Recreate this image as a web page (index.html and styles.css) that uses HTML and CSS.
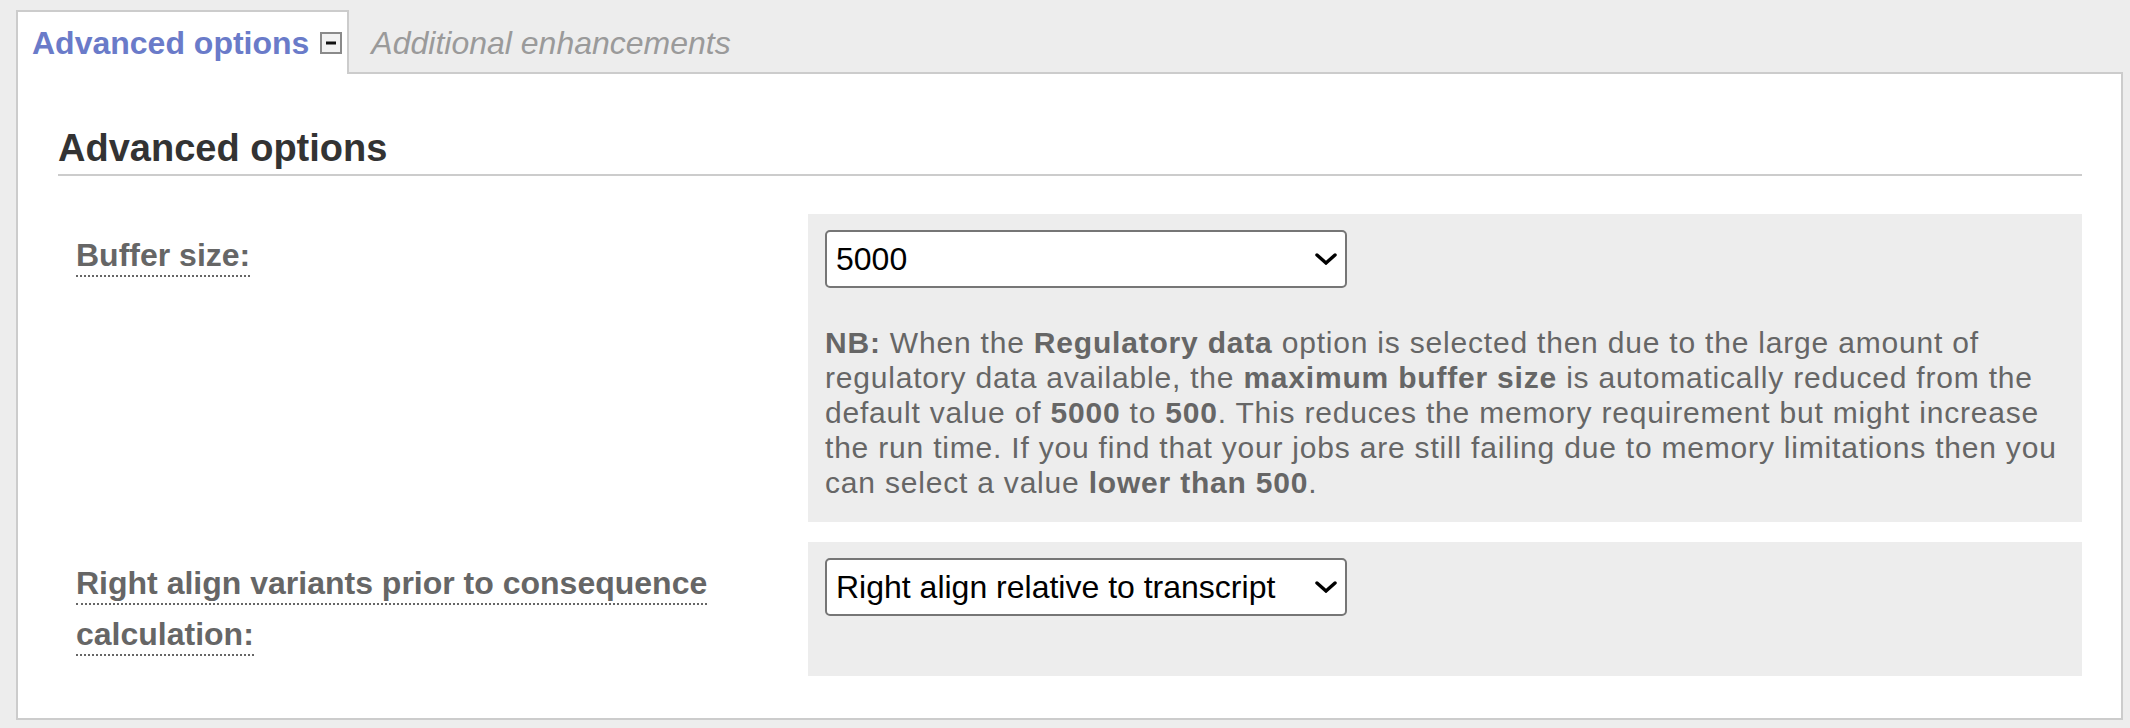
FILE: index.html
```html
<!DOCTYPE html>
<html lang="en">
<head>
<meta charset="utf-8">
<title>Advanced options</title>
<link rel="stylesheet" href="styles.css">
</head>
<body>
<div class="page">
  <div class="tabs">
    <div class="tab tab-active">Advanced options<svg class="toggle" width="22" height="22" viewBox="0 0 22 22"><rect x="1" y="1" width="20" height="20" fill="#f2f2f2" stroke="#8a8a8a" stroke-width="2"/><rect x="6" y="9.5" width="10" height="3" fill="#111"/></svg></div>
    <div class="tab">Additional enhancements</div>
  </div>
  <div class="panel">
    <h2 class="section-title">Advanced options</h2>
    <div class="rows">
      <div class="row">
        <div class="label-cell"><span class="label">Buffer size:</span></div>
        <div class="field-cell">
          <div class="select-wrap">
            <select class="select"><option>5000</option></select>
            <svg class="chevron" width="22" height="12" viewBox="0 0 22 12"><polyline points="2,2 11,10 20,2" fill="none" stroke="#000" stroke-width="3.4" stroke-linecap="round" stroke-linejoin="miter"/></svg>
          </div>
          <p class="note"><b>NB:</b> When the <b>Regulatory data</b> option is selected then due to the large amount of regulatory data available, the <b>maximum buffer size</b> is automatically reduced from the default value of <b>5000</b> to <b>500</b>. This reduces the memory requirement but might increase the run time. If you find that your jobs are still failing due to memory limitations then you can select a value <b>lower than 500</b>.</p>
        </div>
      </div>
      <div class="row">
        <div class="label-cell"><span class="label">Right align variants prior to consequence calculation:</span></div>
        <div class="field-cell">
          <div class="select-wrap">
            <select class="select"><option>Right align relative to transcript</option></select>
            <svg class="chevron" width="22" height="12" viewBox="0 0 22 12"><polyline points="2,2 11,10 20,2" fill="none" stroke="#000" stroke-width="3.4" stroke-linecap="round" stroke-linejoin="miter"/></svg>
          </div>
        </div>
      </div>
    </div>
  </div>
</div>
</body>
</html>
```

FILE: styles.css
```css
html, body {
  margin: 0;
  padding: 0;
  background: #ededed;
}

body {
  font-family: "Liberation Sans", Arial, sans-serif;
  width: 2130px;
  height: 728px;
  overflow: hidden;
}

.page {
  padding: 10px 7px 0 16px;
}

.tabs {
  display: flex;
  align-items: flex-end;
}

.tab {
  font-size: 32px;
  line-height: 38px;
  padding: 14px 14px 10px 22px;
  color: #9a9a9a;
  font-style: italic;
}

.tab-active {
  position: relative;
  z-index: 1;
  background: #fff;
  border: 2px solid #ccc;
  border-bottom: 0;
  margin-bottom: -2px;
  padding: 12px 5px 12px 14px;
  font-style: normal;
  font-weight: bold;
  color: #6a7bc9;
}

.toggle {
  margin-left: 11px;
  vertical-align: baseline;
}

.panel {
  background: #fff;
  border: 2px solid #ccc;
  padding: 52px 39px 42px 40px;
}

.section-title {
  margin: 0;
  font-size: 38px;
  line-height: 44px;
  font-weight: bold;
  color: #333;
  padding-bottom: 4px;
  border-bottom: 2px solid #ccc;
}

.rows {
  margin-top: 38px;
  display: flex;
  flex-direction: column;
  gap: 20px;
}

.row {
  display: flex;
}

.label-cell {
  flex: none;
  width: 750px;
  box-sizing: border-box;
  padding: 16px 18px;
  font-size: 32px;
  line-height: 51px;
  font-weight: bold;
  color: #666;
}

.label {
  padding-bottom: 2px;
  border-bottom: 2px dotted #666;
}

.field-cell {
  flex: 1;
  background: #ededed;
  padding: 16px 17px 22px;
}

.select-wrap {
  position: relative;
  width: 522px;
}

.select {
  display: block;
  width: 522px;
  height: 58px;
  box-sizing: border-box;
  margin: 0;
  -webkit-appearance: none;
  appearance: none;
  border: 2px solid #767676;
  border-radius: 5px;
  background: #fff;
  color: #000;
  font-family: "Liberation Sans", Arial, sans-serif;
  font-size: 32px;
  padding: 0 40px 0 9px;
}

.chevron {
  position: absolute;
  right: 10px;
  top: 23px;
  pointer-events: none;
}

.note {
  margin: 37px 0 0;
  font-size: 30px;
  line-height: 35px;
  letter-spacing: 0.8px;
  color: #666;
}

.note b {
  font-weight: bold;
}
```
